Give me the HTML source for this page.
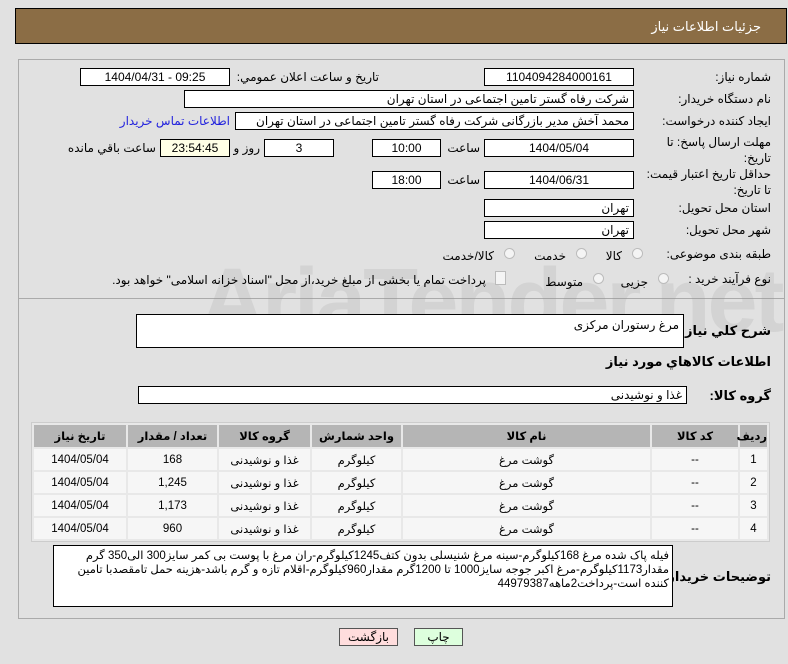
<!DOCTYPE html>
<html><head><meta charset="utf-8">
<style>
body{margin:0;width:788px;height:664px;background:#e1e1e1;font-family:"Liberation Sans","DejaVu Sans",sans-serif;font-size:12px;color:#000;position:relative;overflow:hidden}
.a{position:absolute;white-space:nowrap}
.box{position:absolute;background:#fff;border:1px solid #000;box-sizing:border-box;font-size:12px;line-height:16px;white-space:nowrap;overflow:hidden}
.c{text-align:center}
.r{text-align:right;padding-right:4px;direction:rtl}
.lbl{position:absolute;direction:rtl;text-align:right;white-space:nowrap;font-size:12px}
table{border-collapse:separate;border-spacing:2px;position:absolute;left:31px;top:422px;width:739px;background:#e8e8e8;border:1px solid #ccc;direction:rtl;font-size:11.5px;table-layout:fixed}
th{background:#b5b5b5;height:22px;font-weight:bold;font-size:11.5px;padding:0}
td{background:#f6f6f6;height:21px;text-align:center;padding:0}
.rad{position:absolute;width:11px;height:11px;border:1px solid #bbb;border-radius:50%;background:#f4f4f4;box-sizing:border-box}
</style></head><body>
<div class="a" style="left:15px;top:8px;width:772px;height:36px;background:#8b6d45;border:1px solid #000;box-sizing:border-box"></div>
<div class="a" style="right:27px;top:19px;color:#fff;font-size:13px;direction:rtl">جزئیات اطلاعات نیاز</div>

<div class="a" style="left:18px;top:59px;width:767px;height:560px;border:1px solid #aaa;box-sizing:border-box"></div>
<div class="a" style="left:18px;top:298px;width:767px;height:1px;background:#aaa"></div>

<div class="a" style="left:200px;top:250px;font-size:90px;font-weight:bold;color:rgba(150,150,150,0.18);letter-spacing:-3px">AriaTender.net</div>

<div class="lbl" style="right:17px;top:70px">شماره نیاز:</div>
<div class="box c" style="left:484px;top:68px;width:150px;height:18px">1104094284000161</div>
<div class="lbl" style="right:409px;top:70px">تاریخ و ساعت اعلان عمومي:</div>
<div class="box c" style="left:80px;top:68px;width:150px;height:18px">1404/04/31 - 09:25</div>

<div class="lbl" style="right:17px;top:92px">نام دستگاه خریدار:</div>
<div class="box r" style="left:184px;top:90px;width:450px;height:18px">شرکت رفاه گستر تامین اجتماعی در استان تهران</div>

<div class="lbl" style="right:17px;top:114px">ایجاد کننده درخواست:</div>
<div class="box r" style="left:235px;top:112px;width:399px;height:18px">محمد آخش مدیر بازرگانی شرکت رفاه گستر تامین اجتماعی در استان تهران</div>
<div class="lbl" style="right:558px;top:114px;color:#2222dd">اطلاعات تماس خریدار</div>

<div class="lbl" style="right:17px;top:134px;line-height:16px">مهلت ارسال پاسخ: تا<br>تاریخ:</div>
<div class="box c" style="left:484px;top:139px;width:150px;height:18px">1404/05/04</div>
<div class="lbl" style="right:308px;top:141px">ساعت</div>
<div class="box c" style="left:372px;top:139px;width:69px;height:18px">10:00</div>
<div class="box c" style="left:264px;top:139px;width:70px;height:18px">3</div>
<div class="lbl" style="right:528px;top:141px">روز و</div>
<div class="box c" style="left:160px;top:139px;width:70px;height:18px;background:#ffffe6">23:54:45</div>
<div class="lbl" style="right:632px;top:141px">ساعت باقي مانده</div>

<div class="lbl" style="right:17px;top:166px;line-height:16px">حداقل تاریخ اعتبار قیمت:<br>تا تاریخ:</div>
<div class="box c" style="left:484px;top:171px;width:150px;height:18px">1404/06/31</div>
<div class="lbl" style="right:308px;top:173px">ساعت</div>
<div class="box c" style="left:372px;top:171px;width:69px;height:18px">18:00</div>

<div class="lbl" style="right:17px;top:201px">استان محل تحویل:</div>
<div class="box r" style="left:484px;top:199px;width:150px;height:18px">تهران</div>
<div class="lbl" style="right:17px;top:223px">شهر محل تحویل:</div>
<div class="box r" style="left:484px;top:221px;width:150px;height:18px">تهران</div>

<div class="lbl" style="right:17px;top:247px">طبقه بندی موضوعی:</div>
<div class="rad" style="left:632px;top:248px"></div>
<div class="lbl" style="right:166px;top:249px">کالا</div>
<div class="rad" style="left:576px;top:248px"></div>
<div class="lbl" style="right:222px;top:249px">خدمت</div>
<div class="rad" style="left:504px;top:248px"></div>
<div class="lbl" style="right:294px;top:249px">کالا/خدمت</div>

<div class="lbl" style="right:17px;top:272px">نوع فرآیند خرید :</div>
<div class="rad" style="left:658px;top:273px"></div>
<div class="lbl" style="right:140px;top:275px">جزیی</div>
<div class="rad" style="left:593px;top:273px"></div>
<div class="lbl" style="right:205px;top:275px">متوسط</div>
<div class="a" style="left:495px;top:271px;width:9px;height:12px;border:1px solid #bbb;background:#f4f4f4"></div>
<div class="lbl" style="right:302px;top:273px">پرداخت تمام یا بخشی از مبلغ خرید،از محل "اسناد خزانه اسلامی" خواهد بود.</div>

<div class="lbl" style="right:17px;top:323px;font-weight:bold;font-size:13px">شرح کلي نیاز:</div>
<div class="box r" style="left:136px;top:314px;width:548px;height:34px;padding-top:2px">مرغ رستوران مرکزی</div>
<div class="lbl" style="right:17px;top:354px;font-weight:bold;font-size:13px">اطلاعات کالاهاي مورد نیاز</div>
<div class="lbl" style="right:17px;top:388px;font-weight:bold;font-size:13px">گروه کالا:</div>
<div class="box r" style="left:138px;top:386px;width:549px;height:18px">غذا و نوشیدنی</div>

<table>
<colgroup><col style="width:27px"><col style="width:86px"><col style="width:247px"><col style="width:89px"><col style="width:91px"><col style="width:89px"><col></colgroup>
<tr><th>ردیف</th><th>کد کالا</th><th>نام کالا</th><th>واحد شمارش</th><th>گروه کالا</th><th>تعداد / مقدار</th><th>تاریخ نیاز</th></tr>
<tr><td>1</td><td>--</td><td>گوشت مرغ</td><td>کیلوگرم</td><td>غذا و نوشیدنی</td><td>168</td><td>1404/05/04</td></tr>
<tr><td>2</td><td>--</td><td>گوشت مرغ</td><td>کیلوگرم</td><td>غذا و نوشیدنی</td><td>1,245</td><td>1404/05/04</td></tr>
<tr><td>3</td><td>--</td><td>گوشت مرغ</td><td>کیلوگرم</td><td>غذا و نوشیدنی</td><td>1,173</td><td>1404/05/04</td></tr>
<tr><td>4</td><td>--</td><td>گوشت مرغ</td><td>کیلوگرم</td><td>غذا و نوشیدنی</td><td>960</td><td>1404/05/04</td></tr>
</table>

<div class="lbl" style="right:17px;top:569px;font-weight:bold;font-size:13px">توضیحات خریدار:</div>
<div class="box r" style="left:53px;top:545px;width:620px;height:62px;white-space:normal;line-height:14px;padding:3px 3px 0 3px;font-size:11.5px">فیله پاک شده مرغ 168کیلوگرم-سینه مرغ شنیسلی بدون کتف1245کیلوگرم-ران مرغ با پوست بی کمر سایز300 الی350 گرم مقدار1173کیلوگرم-مرغ اکبر جوجه سایز1000 تا 1200گرم مقدار960کیلوگرم-اقلام تازه و گرم باشد-هزینه حمل تامقصدبا تامین کننده است-پرداخت2ماهه44979387</div>

<div class="box c" style="left:339px;top:628px;width:59px;height:18px;background:#fdd;border-color:#555">بازگشت</div>
<div class="box c" style="left:414px;top:628px;width:49px;height:18px;background:#dfd;border-color:#555">چاپ</div>
</body></html>
